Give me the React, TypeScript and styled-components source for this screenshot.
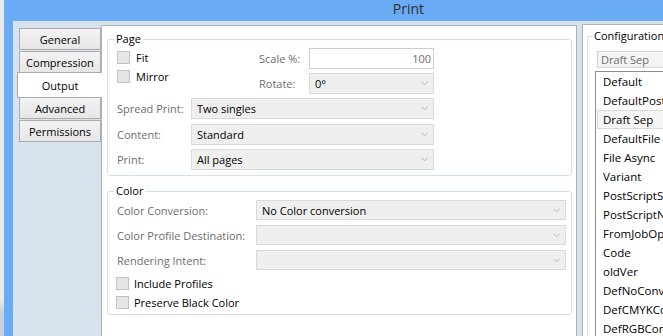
import React from 'react';
import styled, { createGlobalStyle } from 'styled-components';

const GlobalStyle = createGlobalStyle`
  html, body { margin: 0; padding: 0; width: 663px; height: 336px; overflow: hidden; }
  body { font-family: "Open Sans", "Noto Sans", sans-serif; font-size: 11px; color: #000; }
  * { box-sizing: border-box; }
`;

const Screen = styled.div`
  display: flex;
  width: 663px;
  height: 336px;
  overflow: hidden;
`;

const DesktopEdge = styled.div`
  width: 4px;
  flex: none;
  background: linear-gradient(#e9e9e9 0, #e9e9e9 300px, #c6d3dd 312px);
`;

const Window = styled.div`
  flex: 1;
  min-width: 0;
  display: flex;
  flex-direction: column;
  background: #69abf5;
`;

const TitleBar = styled.div`
  height: 21px;
  flex: none;
  display: flex;
  justify-content: center;
  padding-left: 150px;
  font-size: 14px;
  line-height: 17px;
  color: #2e2e2e;
`;

const Frame = styled.div`
  flex: 1;
  min-height: 0;
  display: flex;
  padding-left: 9px;
`;

const Client = styled.div`
  flex: 1;
  min-width: 0;
  display: flex;
  align-items: flex-start;
  background: #d6e3ee;
  padding: 3px 0 0 4px;
`;

const TabColumn = styled.div`
  width: 84px;
  flex: none;
  display: flex;
  flex-direction: column;
  padding-top: 4px;
  position: relative;
  z-index: 1;
`;

const Tab = styled.div<{ $active?: boolean }>`
  display: flex;
  align-items: center;
  justify-content: center;
  font-size: 11px;
  color: #000;
  border: 1px solid #acacac;
  ${({ $active }) =>
    $active
      ? `
    height: 26px;
    width: 85px;
    margin: -2px 0 -1px 0;
    background: #fff;
    border-right: none;
  `
      : `
    height: 22px;
    width: 82px;
    margin: 0 0 1px 2px;
    background: linear-gradient(#f3f3f3, #e6e6e6);
  `}
`;

const ContentPanel = styled.div`
  width: 476px;
  height: 320px;
  flex: none;
  margin-top: 1px;
  background: #fff;
  border: 1px solid #aab3bc;
  padding: 5px 0 0 5px;
`;

const Group = styled.fieldset`
  margin: 0;
  padding: 0;
  width: 465px;
  min-width: 0;
  border: 1px solid #d5dfe6;
  border-radius: 3px;
  & + & {
    margin-top: 7px;
  }
`;

const Legend = styled.legend<{ $ml?: number }>`
  margin-left: ${({ $ml }) => $ml ?? 6}px;
  padding: 0 2px;
  font-size: 11px;
  line-height: 16px;
  color: #000;
  white-space: nowrap;
`;

const GroupBody = styled.div<{ $pb: number }>`
  padding: 1px 4px ${({ $pb }) => $pb}px 9px;
  display: flex;
  flex-direction: column;
`;

const TopRow = styled.div`
  display: flex;
`;

const CheckColumn = styled.div`
  width: 142px;
  display: flex;
  flex-direction: column;
`;

const CheckRow = styled.label<{ $gap?: number; $shift?: number }>`
  height: 19px;
  display: flex;
  align-items: center;
  gap: ${({ $gap }) => $gap ?? 6}px;
  margin-left: ${({ $shift }) => $shift ?? 0}px;
  color: #000;
`;

const Box = styled.span`
  width: 13px;
  height: 13px;
  flex: none;
  background: #e6e6e6;
  border: 1px solid #c2c2c2;
`;

const FormGrid = styled.div<{ $cols: string; $rowH: number; $gap: number; $mt?: number }>`
  display: grid;
  grid-template-columns: ${({ $cols }) => $cols};
  grid-auto-rows: ${({ $rowH }) => $rowH}px;
  row-gap: ${({ $gap }) => $gap}px;
  margin-top: ${({ $mt }) => $mt ?? 0}px;
  align-items: center;
`;

const Label = styled.span`
  color: #6d6d6d;
  white-space: nowrap;
`;

const Select = styled.div`
  height: 100%;
  display: flex;
  align-items: center;
  justify-content: space-between;
  padding: 0 5px 0 5px;
  background: #efefef;
  border: 1px solid #d9d9d9;
  color: #000;
  white-space: nowrap;
`;

const TextInput = styled.div`
  height: 100%;
  display: flex;
  align-items: center;
  justify-content: flex-end;
  padding-right: 2px;
  background: #fff;
  border: 1px solid #cdcdcd;
  color: #6d6d6d;
`;

const Chevron = () => (
  <svg width="7" height="5" viewBox="0 0 7 5">
    <polyline points="0.5,0.8 3.5,3.8 6.5,0.8" fill="none" stroke="#b4b4b4" strokeWidth="1" />
  </svg>
);

const Dropdown = ({ value }: { value?: string }) => (
  <Select>
    <span>{value ?? ''}</span>
    <Chevron />
  </Select>
);

const CheckRows = styled.div<{ $mt: number }>`
  display: flex;
  flex-direction: column;
  margin-top: ${({ $mt }) => $mt}px;
`;

const RightPanel = styled.div`
  flex: 1;
  min-width: 0;
  height: 320px;
  margin-left: 5px;
  background: #fff;
  border: 1px solid #aab3bc;
  border-right: none;
  padding: 3px 0 0 4px;
  overflow: hidden;
`;

const ConfigGroup = styled.fieldset`
  margin: 0;
  padding: 0 0 0 7px;
  width: 240px;
  min-width: 0;
  border: 1px solid #d5dfe6;
  border-right: none;
  border-radius: 3px 0 0 3px;
  height: 400px;
`;

const ConfigCombo = styled.div`
  margin: 7px 0 3px 2px;
  height: 17px;
  display: flex;
  align-items: center;
  padding-left: 3px;
  background: #f4f4f4;
  border: 1px solid #d4d4d4;
  color: #6d6d6d;
`;

const ListBox = styled.div`
  border: 1px solid #8e8e8e;
  border-right: none;
  display: flex;
  flex-direction: column;
`;

const ListItem = styled.div<{ $selected?: boolean }>`
  height: 19px;
  display: flex;
  align-items: center;
  padding-left: 5px;
  margin-left: 1px;
  white-space: nowrap;
  color: #000;
  font-size: 11.5px;
  border: 1px solid ${({ $selected }) => ($selected ? '#d9d9d9' : 'transparent')};
  background: ${({ $selected }) => ($selected ? '#f5f5f5' : 'transparent')};
`;

const tabs = ['General', 'Compression', 'Output', 'Advanced', 'Permissions'];
const configs = [
  'Default',
  'DefaultPostScript',
  'Draft Sep',
  'DefaultFile',
  'File Async',
  'Variant',
  'PostScriptSep',
  'PostScriptNoSep',
  'FromJobOptions',
  'Code',
  'oldVer',
  'DefNoConversion',
  'DefCMYKConversion',
  'DefRGBConversion',
];

export default function App() {
  return (
    <>
      <GlobalStyle />
      <Screen>
        <DesktopEdge />
        <Window>
          <TitleBar>Print</TitleBar>
          <Frame>
            <Client>
              <TabColumn>
                {tabs.map((t) => (
                  <Tab key={t} $active={t === 'Output'}>
                    {t}
                  </Tab>
                ))}
              </TabColumn>
              <ContentPanel>
                <Group>
                  <Legend>Page</Legend>
                  <GroupBody $pb={5}>
                    <TopRow>
                      <CheckColumn>
                        <CheckRow>
                          <Box />
                          Fit
                        </CheckRow>
                        <CheckRow>
                          <Box />
                          Mirror
                        </CheckRow>
                      </CheckColumn>
                      <FormGrid $cols="50px 125px" $rowH={21} $gap={4}>
                        <Label>Scale %:</Label>
                        <TextInput>100</TextInput>
                        <Label>Rotate:</Label>
                        <Dropdown value="0°" />
                      </FormGrid>
                    </TopRow>
                    <FormGrid $cols="74px 243px" $rowH={21} $gap={4.5} $mt={4}>
                      <Label>Spread Print:</Label>
                      <Dropdown value="Two singles" />
                      <Label>Content:</Label>
                      <Dropdown value="Standard" />
                      <Label>Print:</Label>
                      <Dropdown value="All pages" />
                    </FormGrid>
                  </GroupBody>
                </Group>
                <Group>
                  <Legend>Color</Legend>
                  <GroupBody $pb={2}>
                    <FormGrid $cols="139px 310px" $rowH={20} $gap={5}>
                      <Label>Color Conversion:</Label>
                      <Dropdown value="No Color conversion" />
                      <Label>Color Profile Destination:</Label>
                      <Dropdown />
                      <Label>Rendering Intent:</Label>
                      <Dropdown />
                    </FormGrid>
                    <CheckRows $mt={4}>
                      <CheckRow $gap={5} $shift={-1}>
                        <Box />
                        Include Profiles
                      </CheckRow>
                      <CheckRow $gap={5} $shift={-1}>
                        <Box />
                        Preserve Black Color
                      </CheckRow>
                    </CheckRows>
                  </GroupBody>
                </Group>
              </ContentPanel>
              <RightPanel>
                <ConfigGroup>
                  <Legend $ml={-3}>Configurations</Legend>
                  <ConfigCombo>Draft Sep</ConfigCombo>
                  <ListBox>
                    {configs.map((c) => (
                      <ListItem key={c} $selected={c === 'Draft Sep'}>
                        {c}
                      </ListItem>
                    ))}
                  </ListBox>
                </ConfigGroup>
              </RightPanel>
            </Client>
          </Frame>
        </Window>
      </Screen>
    </>
  );
}
